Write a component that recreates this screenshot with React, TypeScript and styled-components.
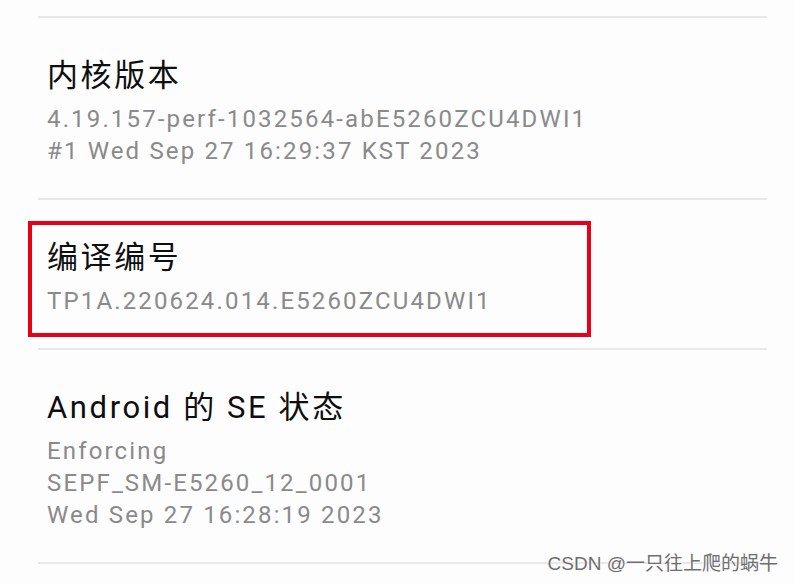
import { createGlobalStyle, styled } from "styled-components";

const GlobalStyle = createGlobalStyle`
  html, body {
    margin: 0;
    padding: 0;
    background: #fdfdfd;
  }
  body {
    font-family: Roboto, "Noto Sans CJK SC", sans-serif;
  }
`;

const Page = styled.div`
  position: relative;
  width: 794px;
  height: 584px;
  overflow: hidden;
  padding-top: 16px;
  box-sizing: border-box;
  background: #fdfdfd;
`;

const List = styled.div`
  margin-left: 38px;
  width: 729px;
  display: flex;
  flex-direction: column;
`;

const Divider = styled.div`
  height: 2px;
  background: #e8e8e8;
`;

const Section = styled.div`
  position: relative;
  padding: 38px 0 31px 9px;
  display: flex;
  flex-direction: column;
`;

const Title = styled.div`
  font-size: 31px;
  line-height: 40px;
  letter-spacing: 2.6px;
  color: #0e0e0e;
  margin-bottom: 7px;
  white-space: nowrap;
`;

const Detail = styled.div`
  font-size: 24px;
  line-height: 32px;
  letter-spacing: 2.15px;
  color: #8a8a8a;
  white-space: nowrap;
`;

const Highlight = styled.div`
  position: absolute;
  left: -10px;
  top: 21px;
  width: 563px;
  height: 116px;
  box-sizing: border-box;
  border: 4px solid #e8001a;
  pointer-events: none;
`;

const Watermark = styled.div`
  position: absolute;
  right: 16px;
  bottom: 8px;
  font-family: "Liberation Sans", "Noto Sans CJK SC", sans-serif;
  font-size: 19px;
  line-height: 24px;
  color: #6e6e6e;
  text-shadow: 0 0 1px #fff, 0 0 2px #fff;
  white-space: nowrap;
`;

const items = [
  {
    title: "内核版本",
    lines: ["4.19.157-perf-1032564-abE5260ZCU4DWI1", "#1 Wed Sep 27 16:29:37 KST 2023"],
  },
  {
    title: "编译编号",
    lines: ["TP1A.220624.014.E5260ZCU4DWI1"],
    marked: true,
  },
  {
    title: "Android 的 SE 状态",
    lines: ["Enforcing", "SEPF_SM-E5260_12_0001", "Wed Sep 27 16:28:19 2023"],
  },
];

const App = () => {
  return (
    <>
      <GlobalStyle />
      <Page>
        <List>
          <Divider />
          {items.map((item) => (
            <div key={item.title}>
              <Section>
                {item.marked && <Highlight />}
                <Title>{item.title}</Title>
                {item.lines.map((line) => (
                  <Detail key={line}>{line}</Detail>
                ))}
              </Section>
              <Divider />
            </div>
          ))}
        </List>
        <Watermark>CSDN @一只往上爬的蜗牛</Watermark>
      </Page>
    </>
  );
};

export default App;
